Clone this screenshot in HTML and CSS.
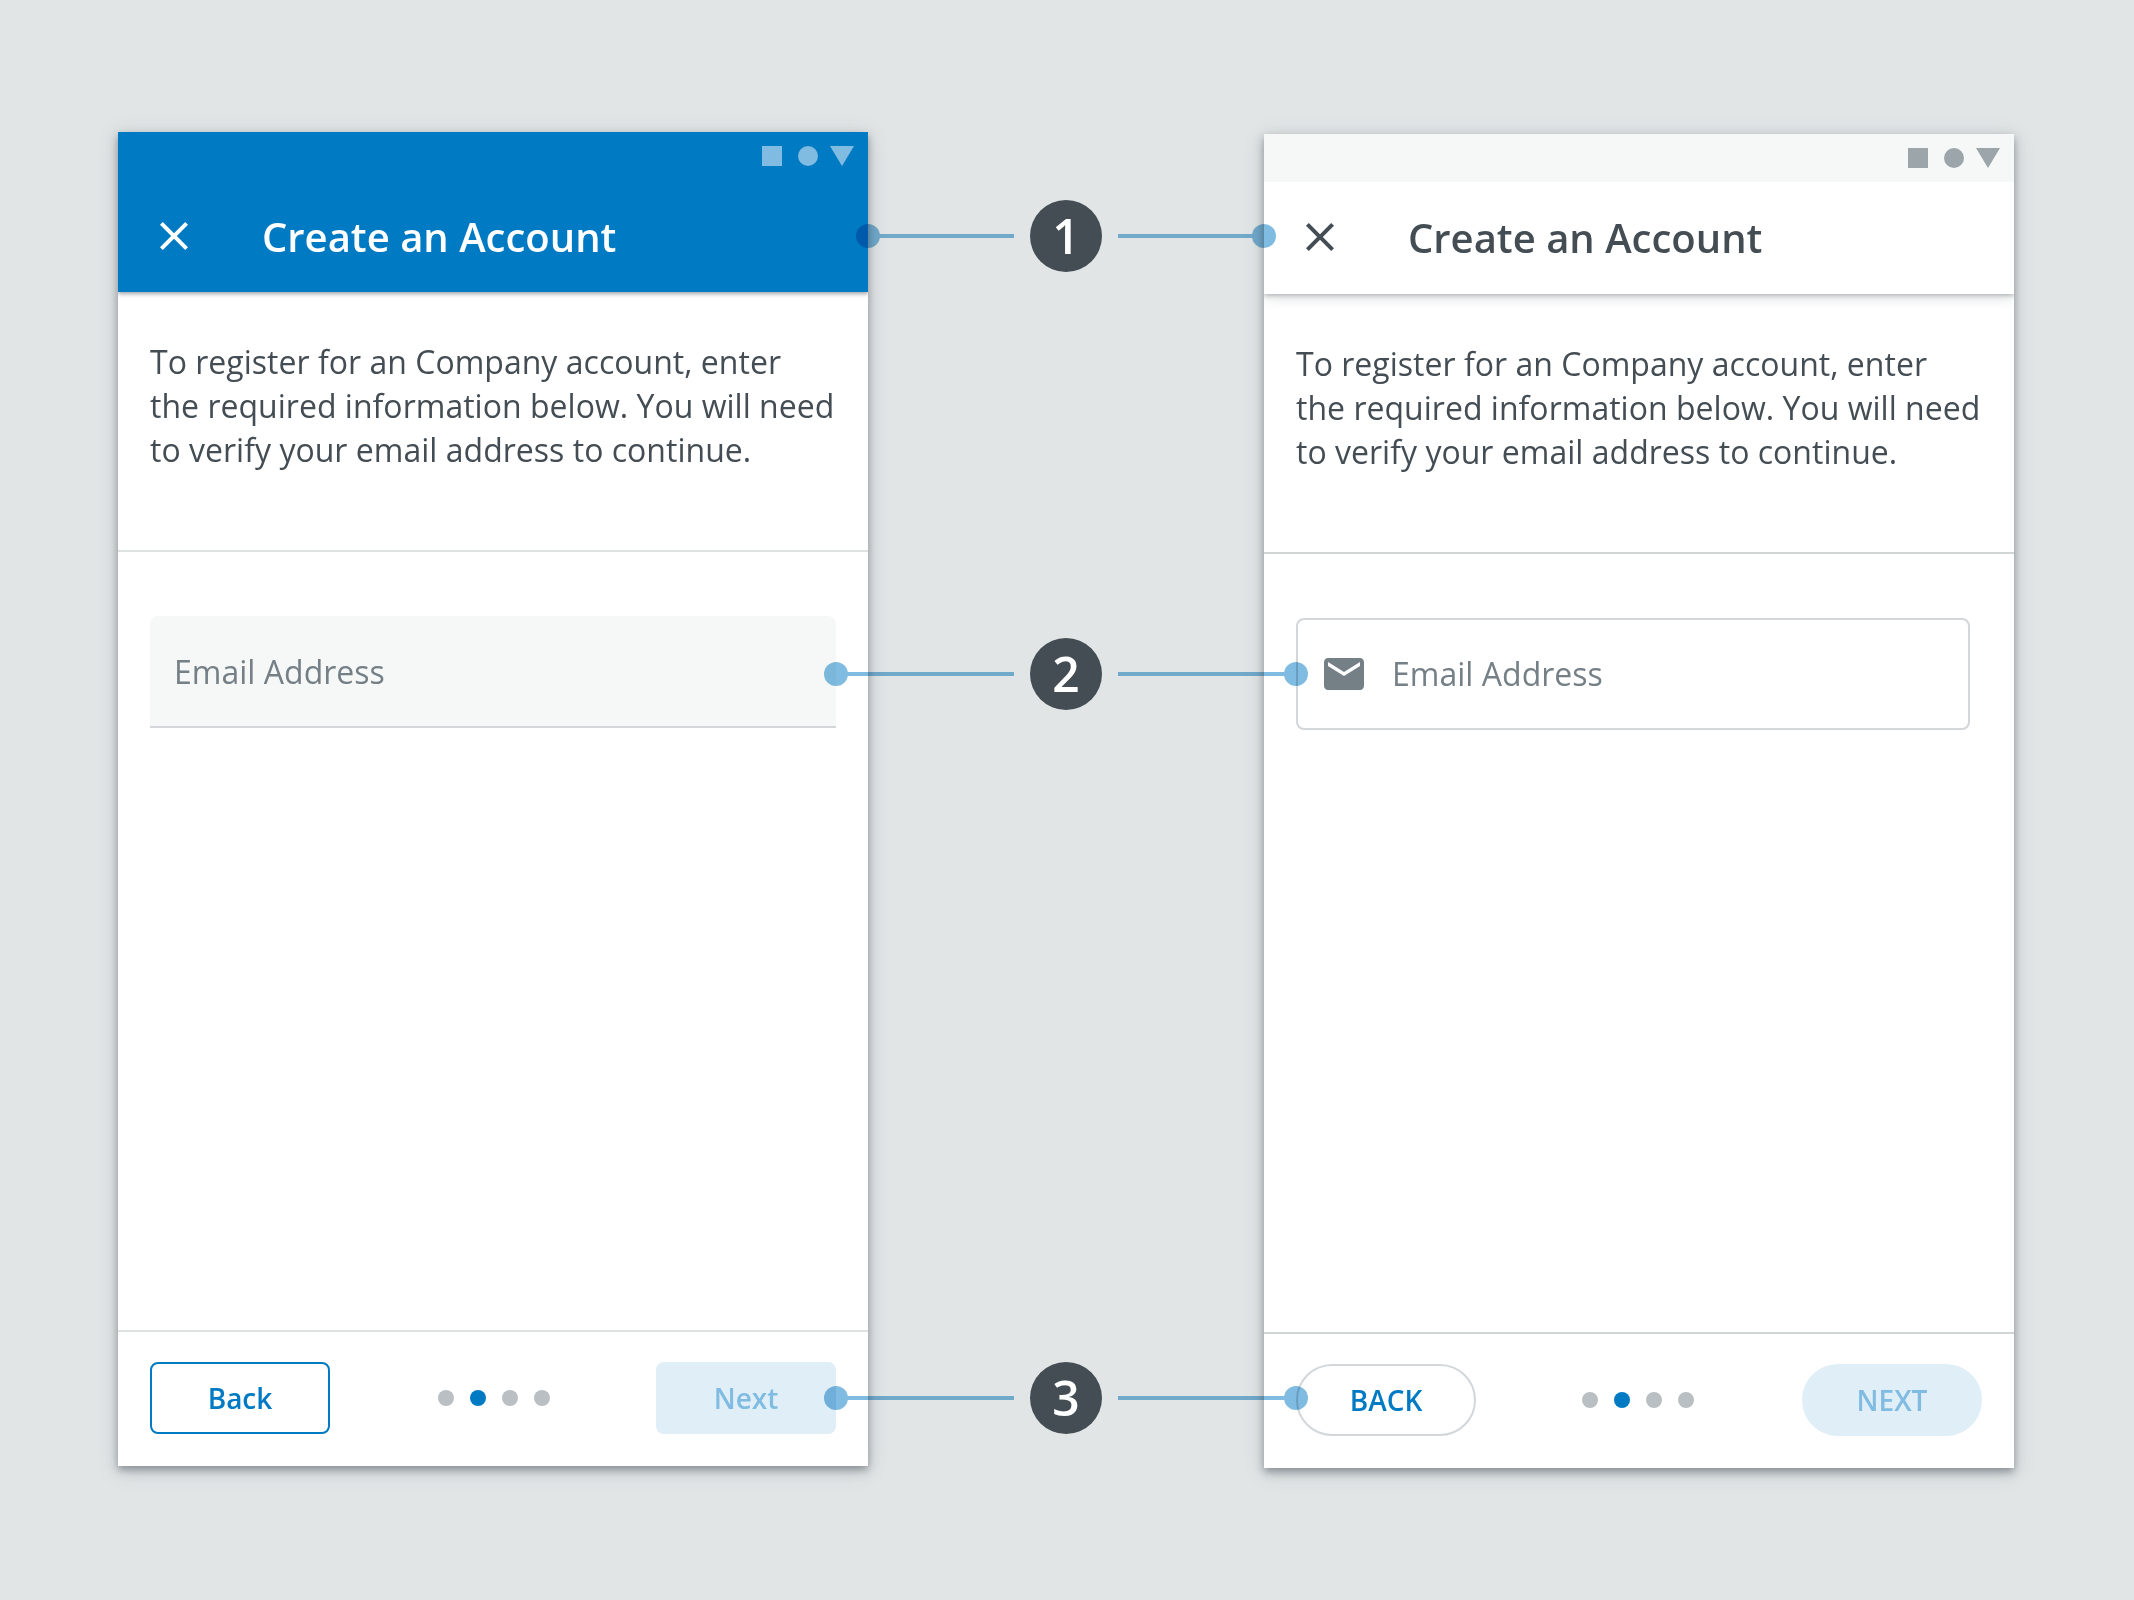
FILE: index.html
```html
<!DOCTYPE html>
<html lang="en">
<head>
<meta charset="utf-8">
<title>Create an Account</title>
<link rel="stylesheet" href="styles.css">
</head>
<body>
<main class="board">
  <section class="phone phone--brand">
    <header class="header">
      <div class="status">
        <svg class="status-icons" width="92" height="20" viewBox="0 0 92 20"><path d="M0 0h20v20H0z"/><circle cx="46" cy="10" r="10"/><path d="M68 0h24L80 20z"/></svg>
      </div>
      <div class="appbar">
        <svg class="close" viewBox="0 0 24 24"><path d="M19 6.41 17.59 5 12 10.59 6.41 5 5 6.41 10.59 12 5 17.59 6.41 19 12 13.41 17.59 19 19 17.59 13.41 12z"/></svg>
        <h1 class="title">Create an Account</h1>
      </div>
    </header>
    <p class="intro">To register for an Company account, enter<br>the required information below. You will need<br>to verify your email address to continue.</p>
    <div class="form">
      <div class="field field--filled"><span class="placeholder">Email Address</span></div>
    </div>
    <footer class="footer">
      <button class="btn btn--back">Back</button>
      <div class="dots"><i class="dot"></i><i class="dot dot--on"></i><i class="dot"></i><i class="dot"></i></div>
      <button class="btn btn--next">Next</button>
    </footer>
  </section>

  <section class="phone phone--light">
    <header class="header">
      <div class="status">
        <svg class="status-icons" width="92" height="20" viewBox="0 0 92 20"><path d="M0 0h20v20H0z"/><circle cx="46" cy="10" r="10"/><path d="M68 0h24L80 20z"/></svg>
      </div>
      <div class="appbar">
        <svg class="close" viewBox="0 0 24 24"><path d="M19 6.41 17.59 5 12 10.59 6.41 5 5 6.41 10.59 12 5 17.59 6.41 19 12 13.41 17.59 19 19 17.59 13.41 12z"/></svg>
        <h1 class="title">Create an Account</h1>
      </div>
    </header>
    <p class="intro">To register for an Company account, enter<br>the required information below. You will need<br>to verify your email address to continue.</p>
    <div class="form">
      <div class="field field--outlined">
        <svg class="mail" viewBox="0 0 24 24"><path d="M20 4H4c-1.1 0-1.99.9-1.99 2L2 18c0 1.1.9 2 2 2h16c1.1 0 2-.9 2-2V6c0-1.1-.9-2-2-2zm0 4-8 5-8-5V6l8 5 8-5v2z"/></svg>
        <span class="placeholder">Email Address</span>
      </div>
    </div>
    <footer class="footer">
      <button class="btn btn--back">BACK</button>
      <div class="dots"><i class="dot"></i><i class="dot dot--on"></i><i class="dot"></i><i class="dot"></i></div>
      <button class="btn btn--next">NEXT</button>
    </footer>
  </section>

  <div class="note note--header">
    <div class="link link--left"><i class="pin"></i><i class="line"></i></div>
    <span class="badge">1</span>
    <div class="link link--right"><i class="line"></i><i class="pin"></i></div>
  </div>
  <div class="note note--field">
    <div class="link link--left"><i class="pin"></i><i class="line"></i></div>
    <span class="badge">2</span>
    <div class="link link--right"><i class="line"></i><i class="pin"></i></div>
  </div>
  <div class="note note--footer">
    <div class="link link--left"><i class="pin"></i><i class="line"></i></div>
    <span class="badge">3</span>
    <div class="link link--right"><i class="line"></i><i class="pin"></i></div>
  </div>
</main>
</body>
</html>
```
FILE: styles.css
```css
* { box-sizing: border-box; }

html, body { margin: 0; background: #e1e5e6; }

.board {
  position: relative;
  display: flex;
  align-items: flex-start;
  gap: 396px;
  width: 2134px;
  height: 1600px;
  padding: 132px 0 0 118px;
  overflow: hidden;
  background: #e1e5e6;
  color: #434d53;
  font-family: "Open Sans", sans-serif;
}

.phone {
  display: flex;
  flex-direction: column;
  flex: none;
  width: 750px;
  height: 1334px;
  background: #fff;
  box-shadow: 0 4px 8px rgba(67, 77, 83, .5), 0 4px 20px rgba(67, 77, 83, .18);
}
.phone--light { margin-top: 2px; }

/* Header */
.header {
  flex: none;
  height: 160px;
  clip-path: inset(0 0 -24px 0);
}
.phone--brand .header { background: #007ac3; color: #fff; box-shadow: 0 2px 4px rgba(67, 77, 83, .5); }
.phone--light .header { background: #fff; box-shadow: 0 2px 4px rgba(67, 77, 83, .3), 0 4px 12px rgba(67, 77, 83, .16); }

.status {
  display: flex;
  justify-content: flex-end;
  height: 48px;
  padding: 14px 14px 0 0;
}
.phone--light .status { background: #f6f8f8; }
.status-icons { display: block; fill: #80bce1; }
.phone--light .status-icons { fill: #9ca5aa; }

.appbar {
  display: flex;
  align-items: flex-start;
  height: 112px;
  padding: 32px 32px 0;
}
.close { width: 48px; height: 48px; fill: currentColor; }
.phone--light .close { margin-top: -1px; }
.title {
  margin: -3px 0 0 64px;
  font-size: 40px;
  font-weight: 600;
  line-height: 56px;
  white-space: nowrap;
}
.phone--light .title { margin-top: -4px; }

.intro {
  flex: none;
  height: 260px;
  margin: 0;
  padding: 48px 32px 0;
  border-bottom: 2px solid #dfe2e2;
  font-size: 32px;
  line-height: 44px;
  letter-spacing: .02px;
  white-space: nowrap;
}
.phone--light .intro { border-color: #d0d5d6; }

/* Form */
.form { flex: 1; padding: 64px 32px 0; }
.field {
  display: flex;
  align-items: center;
  height: 112px;
  color: #747f86;
  font-size: 32px;
  letter-spacing: .02px;
}
.field--filled {
  padding: 0 24px;
  border-bottom: 2px solid #d3d7da;
  border-radius: 8px 8px 0 0;
  background: #f6f8f8;
}
.field--outlined {
  width: 674px;
  padding: 0 22px;
  border: 2px solid #d3d7da;
  border-radius: 8px;
}
.field--outlined .placeholder { margin-bottom: 2px; }
.mail { width: 48px; height: 48px; margin-right: 24px; fill: #747f86; }

/* Footer */
.footer {
  display: flex;
  flex: none;
  height: 136px;
  padding: 30px 32px 0;
  border-top: 2px solid #dfe2e2;
}
.phone--light .footer { border-color: #d0d5d6; }
.btn {
  width: 180px;
  height: 72px;
  padding: 0;
  border: 2px solid #007ac3;
  border-radius: 8px;
  background: transparent;
  color: #007ac3;
  font: 600 28px/40px "Open Sans", sans-serif;
}
.btn--next { margin-left: auto; border-color: #e0eef8; background: #e0eef8; color: #80bce1; }
.phone--light .btn { border-radius: 36px; }
.phone--light .btn--back { border-color: #d3d7da; }

.dots { display: flex; gap: 16px; padding-top: 28px; margin-left: 108px; }
.phone--light .dots { margin-left: 106px; }
.dot { width: 16px; height: 16px; border-radius: 50%; background: #b9bfc3; }
.dot--on { background: #007ac3; }

/* Numbered callouts laid over both screens */
.note {
  position: absolute;
  display: flex;
  align-items: center;
  gap: 16px;
  height: 72px;
}
.note--header { left: 856px; top: 200px; }
.note--field { left: 824px; top: 638px; }
.note--footer { left: 824px; top: 1362px; }

.link { display: flex; align-items: center; width: 190px; mix-blend-mode: multiply; }
.note--header .link { width: 158px; }
.pin { flex: none; width: 24px; height: 24px; border-radius: 50%; background: #80bce1; }
.line { flex: 1; height: 4px; background: #80bce1; }
.link--left .line { margin-left: -2px; }
.link--right .line { margin-right: -2px; }

.badge {
  width: 72px;
  height: 72px;
  border-radius: 50%;
  background: #434d53;
  color: #fff;
  font-size: 48px;
  font-weight: 600;
  line-height: 72px;
  text-align: center;
}
```
